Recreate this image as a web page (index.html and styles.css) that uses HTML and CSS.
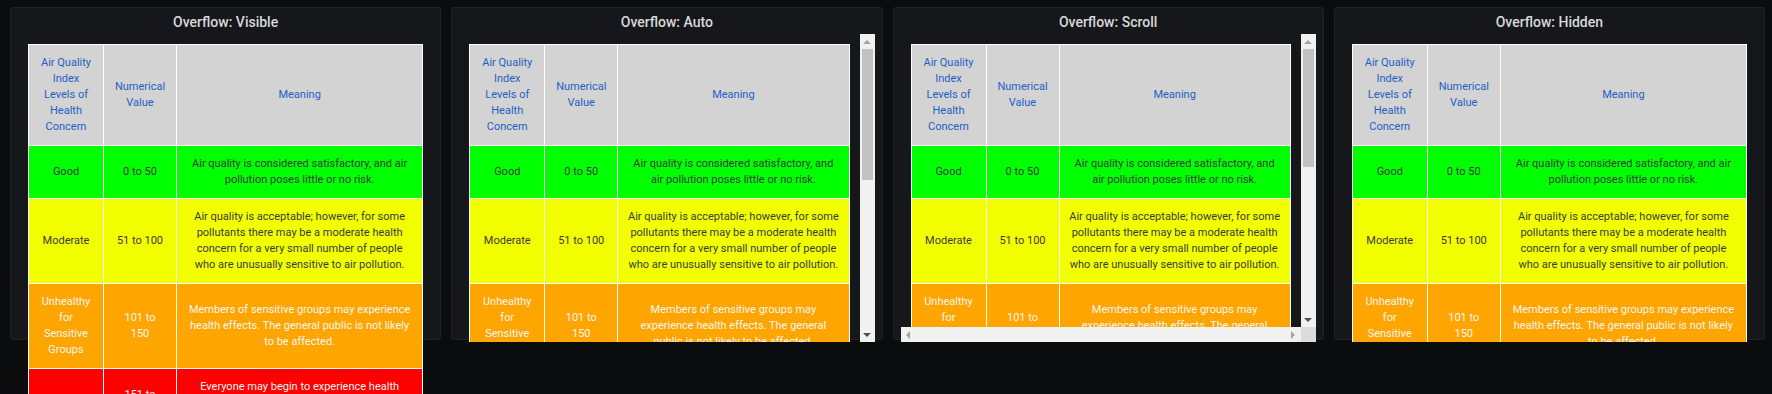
FILE: index.html
```html
<!DOCTYPE html>
<html lang="en">
<head>
    <meta charset="UTF-8">
    <meta name="viewport" content="width=device-width, initial-scale=1.0">
    <title>Overflow test</title>
    <link rel="stylesheet" href="styles.css">
</head>
<body>
    <div class="dashboard">

        <div class="panel">
            <div class="panel-header">Overflow: Visible</div>
            <div class="panel-content overflow-visible">
                <table class="aqi">
                    <colgroup><col class="col-level"><col class="col-value"><col></colgroup>
                    <tr class="head"><th>Air Quality Index Levels of Health Concern</th><th>Numerical Value</th><th>Meaning</th></tr>
                    <tr class="good"><td>Good</td><td>0 to 50</td><td>Air quality is considered satisfactory, and air pollution poses little or no risk.</td></tr>
                    <tr class="moderate"><td>Moderate</td><td>51 to 100</td><td>Air quality is acceptable; however, for some pollutants there may be a moderate health concern for a very small number of people who are unusually sensitive to air pollution.</td></tr>
                    <tr class="sensitive"><td>Unhealthy for Sensitive Groups</td><td>101 to 150</td><td>Members of sensitive groups may experience health effects. The general public is not likely to be affected.</td></tr>
                    <tr class="unhealthy"><td>Unhealthy</td><td>151 to 200</td><td>Everyone may begin to experience health effects; members of sensitive groups may experience more serious health effects.</td></tr>
                    <tr class="very-unhealthy"><td>Very Unhealthy</td><td>201 to 300</td><td>Health alert: everyone may experience more serious health effects.</td></tr>
                    <tr class="hazardous"><td>Hazardous</td><td>301 to 500</td><td>Health warnings of emergency conditions. The entire population is more likely to be affected.</td></tr>
                </table>
            </div>
        </div>

        <div class="panel">
            <div class="panel-header">Overflow: Auto</div>
            <div class="panel-content scroll-frame">
                <div class="viewport">
                    <table class="aqi">
                        <colgroup><col class="col-level"><col class="col-value"><col></colgroup>
                        <tr class="head"><th>Air Quality Index Levels of Health Concern</th><th>Numerical Value</th><th>Meaning</th></tr>
                        <tr class="good"><td>Good</td><td>0 to 50</td><td>Air quality is considered satisfactory, and air pollution poses little or no risk.</td></tr>
                        <tr class="moderate"><td>Moderate</td><td>51 to 100</td><td>Air quality is acceptable; however, for some pollutants there may be a moderate health concern for a very small number of people who are unusually sensitive to air pollution.</td></tr>
                        <tr class="sensitive"><td>Unhealthy for Sensitive Groups</td><td>101 to 150</td><td>Members of sensitive groups may experience health effects. The general public is not likely to be affected.</td></tr>
                        <tr class="unhealthy"><td>Unhealthy</td><td>151 to 200</td><td>Everyone may begin to experience health effects; members of sensitive groups may experience more serious health effects.</td></tr>
                        <tr class="very-unhealthy"><td>Very Unhealthy</td><td>201 to 300</td><td>Health alert: everyone may experience more serious health effects.</td></tr>
                        <tr class="hazardous"><td>Hazardous</td><td>301 to 500</td><td>Health warnings of emergency conditions. The entire population is more likely to be affected.</td></tr>
                    </table>
                </div>
                <div class="vbar">
                    <span class="arrow up"></span>
                    <span class="track"><span class="thumb thumb-auto"></span></span>
                    <span class="arrow down"></span>
                </div>
            </div>
        </div>

        <div class="panel">
            <div class="panel-header">Overflow: Scroll</div>
            <div class="panel-content scroll-frame both">
                <div class="viewport">
                    <table class="aqi">
                        <colgroup><col class="col-level"><col class="col-value"><col></colgroup>
                        <tr class="head"><th>Air Quality Index Levels of Health Concern</th><th>Numerical Value</th><th>Meaning</th></tr>
                        <tr class="good"><td>Good</td><td>0 to 50</td><td>Air quality is considered satisfactory, and air pollution poses little or no risk.</td></tr>
                        <tr class="moderate"><td>Moderate</td><td>51 to 100</td><td>Air quality is acceptable; however, for some pollutants there may be a moderate health concern for a very small number of people who are unusually sensitive to air pollution.</td></tr>
                        <tr class="sensitive"><td>Unhealthy for Sensitive Groups</td><td>101 to 150</td><td>Members of sensitive groups may experience health effects. The general public is not likely to be affected.</td></tr>
                        <tr class="unhealthy"><td>Unhealthy</td><td>151 to 200</td><td>Everyone may begin to experience health effects; members of sensitive groups may experience more serious health effects.</td></tr>
                        <tr class="very-unhealthy"><td>Very Unhealthy</td><td>201 to 300</td><td>Health alert: everyone may experience more serious health effects.</td></tr>
                        <tr class="hazardous"><td>Hazardous</td><td>301 to 500</td><td>Health warnings of emergency conditions. The entire population is more likely to be affected.</td></tr>
                    </table>
                </div>
                <div class="vbar">
                    <span class="arrow up"></span>
                    <span class="track"><span class="thumb thumb-scroll"></span></span>
                    <span class="arrow down"></span>
                </div>
                <div class="hbar">
                    <span class="arrow left"></span>
                    <span class="track"></span>
                    <span class="arrow right"></span>
                </div>
                <div class="corner"></div>
            </div>
        </div>

        <div class="panel">
            <div class="panel-header">Overflow: Hidden</div>
            <div class="panel-content overflow-hidden">
                <table class="aqi">
                    <colgroup><col class="col-level"><col class="col-value"><col></colgroup>
                    <tr class="head"><th>Air Quality Index Levels of Health Concern</th><th>Numerical Value</th><th>Meaning</th></tr>
                    <tr class="good"><td>Good</td><td>0 to 50</td><td>Air quality is considered satisfactory, and air pollution poses little or no risk.</td></tr>
                    <tr class="moderate"><td>Moderate</td><td>51 to 100</td><td>Air quality is acceptable; however, for some pollutants there may be a moderate health concern for a very small number of people who are unusually sensitive to air pollution.</td></tr>
                    <tr class="sensitive"><td>Unhealthy for Sensitive Groups</td><td>101 to 150</td><td>Members of sensitive groups may experience health effects. The general public is not likely to be affected.</td></tr>
                    <tr class="unhealthy"><td>Unhealthy</td><td>151 to 200</td><td>Everyone may begin to experience health effects; members of sensitive groups may experience more serious health effects.</td></tr>
                    <tr class="very-unhealthy"><td>Very Unhealthy</td><td>201 to 300</td><td>Health alert: everyone may experience more serious health effects.</td></tr>
                    <tr class="hazardous"><td>Hazardous</td><td>301 to 500</td><td>Health warnings of emergency conditions. The entire population is more likely to be affected.</td></tr>
                </table>
            </div>
        </div>

    </div>
</body>
</html>
```

FILE: styles.css
```css
html, body {
    height: 100%;
    overflow: hidden;
}
body {
    font-family: Roboto, "Liberation Sans", sans-serif;
    background-color: #0b0c0e;
    color: #d8d9da;
    margin: 0;
}
.dashboard {
    display: grid;
    grid-template-columns: repeat(4, 1fr);
    gap: 10px;
    padding: 7px 7px 0 10px;
}
.panel {
    height: 333px;
    box-sizing: border-box;
    background-color: #16171a;
    border: 1px solid #202226;
    border-radius: 3px;
    padding: 0 7px;
}
.panel-header {
    height: 26px;
    line-height: 28px;
    text-align: center;
    font-size: 14px;
    font-weight: 500;
    color: #d8d9da;
}
.panel-content {
    height: 308px;
    box-sizing: border-box;
    padding: 10px;
}
.overflow-visible { overflow: visible; }
.overflow-hidden { overflow: hidden; }

/* drawn scrollbars, the classic chrome look */
.scroll-frame {
    display: grid;
    grid-template-columns: 1fr 15px;
    grid-template-rows: 1fr;
    padding: 0;
}
.scroll-frame.both {
    grid-template-rows: 1fr 15px;
}
.viewport {
    overflow: hidden;
    padding: 10px;
    min-width: 0;
    min-height: 0;
}
.vbar, .hbar {
    display: flex;
    background-color: #f1f1f1;
}
.vbar { flex-direction: column; }
.vbar .arrow { height: 15px; }
.hbar .arrow { width: 15px; }
.arrow {
    flex: none;
    display: flex;
    align-items: center;
    justify-content: center;
}
.arrow::before {
    content: "";
    width: 0;
    height: 0;
    border: 4px solid transparent;
}
.arrow.up::before { border-bottom-color: #a3a3a3; border-top-width: 0; }
.arrow.down::before { border-top-color: #505050; border-bottom-width: 0; }
.arrow.left::before { border-right-color: #a3a3a3; border-left-width: 0; }
.arrow.right::before { border-left-color: #a3a3a3; border-right-width: 0; }
.track {
    flex: 1;
    display: flex;
    flex-direction: column;
}
.thumb {
    margin: 0 2px;
    background-color: #c1c1c1;
}
.thumb-auto { height: 131px; }
.thumb-scroll { height: 118px; }
.corner { background-color: #dcdcdc; }

.aqi {
    width: 100%;
    table-layout: fixed;
    border-collapse: collapse;
    border: 1px solid #fff;
    font-size: 11px;
    line-height: 16px;
}
.col-level { width: 75px; }
.col-value { width: 73px; }
.aqi th, .aqi td {
    border: 1px solid #fff;
    padding: 10px;
    text-align: center;
    vertical-align: middle;
    font-weight: 400;
}
.aqi th:nth-child(3), .aqi td:nth-child(3) {
    padding-left: 9px;
    padding-right: 9px;
}
.head { background-color: #d3d3d3; color: #1f60c4; }
.good { background-color: #00ff00; color: #3a3a3a; }
.moderate { background-color: #f2ff00; color: #3a3a3a; }
.sensitive { background-color: #ffa500; color: #f5f5f5; }
.unhealthy { background-color: #ff0000; color: #f5f5f5; }
.very-unhealthy { background-color: #8f3f97; color: #f5f5f5; }
.hazardous { background-color: #7e0023; color: #f5f5f5; }
```
